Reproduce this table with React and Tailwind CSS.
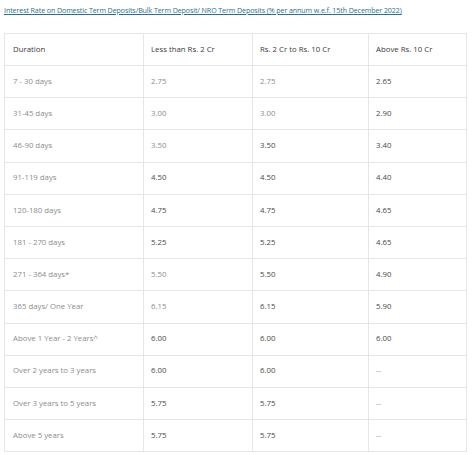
const rows = [
  ["7 - 30 days", ["2.75", 0], ["2.75", 0], ["2.65", 1]],
  ["31-45 days", ["3.00", 0], ["3.00", 0], ["2.90", 1]],
  ["46-90 days", ["3.50", 0], ["3.50", 1], ["3.40", 1]],
  ["91-119 days", ["4.50", 1], ["4.50", 1], ["4.40", 1]],
  ["120-180 days", ["4.75", 1], ["4.75", 1], ["4.65", 1]],
  ["181 - 270 days", ["5.25", 1], ["5.25", 1], ["4.65", 1]],
  ["271 - 364 days*", ["5.50", 0], ["5.50", 1], ["4.90", 1]],
  ["365 days/ One Year", ["6.15", 0], ["6.15", 1], ["5.90", 1]],
  ["Above 1 Year - 2 Years^", ["6.00", 1], ["6.00", 1], ["6.00", 1]],
  ["Over 2 years to 3 years", ["6.00", 1], ["6.00", 1], ["--", 0]],
  ["Over 3 years to 5 years", ["5.75", 1], ["5.75", 1], ["--", 0]],
  ["Above 5 years", ["5.75", 1], ["5.75", 1], ["--", 0]],
];

function Cell({ value, dark }) {
  return (
    <td
      className={
        "border border-[#e6e6e6] px-[7px] align-middle " +
        (dark ? "text-[#4a4a4a] font-medium" : "text-[#8c8c8c]")
      }
    >
      {value}
    </td>
  );
}

export default function App() {
  return (
    <div className="w-[474px] h-[455px] bg-white px-[4px] pt-[5px] font-['Open_Sans',sans-serif] overflow-hidden">
      <a
        href="#"
        className="block text-[7.1px] leading-[10px] text-[#2a6f92] underline tracking-[-0.1px]"
      >
        Interest Rate on Domestic Term Deposits/Bulk Term Deposit/ NRO Term Deposits (% per annum w.e.f. 15th December 2022)
      </a>

      <table className="mt-[18px] w-[462px] border-collapse table-fixed text-[7.8px]">
        <colgroup>
          <col className="w-[139px]" />
          <col className="w-[109px]" />
          <col className="w-[116px]" />
          <col className="w-[98px]" />
        </colgroup>
        <thead>
          <tr className="h-[32px]">
            <th className="border border-[#e6e6e6] px-[8px] text-left font-normal text-[#3a3a3a]">
              Duration
            </th>
            <th className="border border-[#e6e6e6] px-[7px] text-left font-normal text-[#3a3a3a]">
              Less than Rs. 2 Cr
            </th>
            <th className="border border-[#e6e6e6] px-[7px] text-left font-normal text-[#3a3a3a]">
              Rs. 2 Cr to Rs. 10 Cr
            </th>
            <th className="border border-[#e6e6e6] px-[7px] text-left font-normal text-[#3a3a3a]">
              Above Rs. 10 Cr
            </th>
          </tr>
        </thead>
        <tbody>
          {rows.map(([label, a, b, c]) => (
            <tr key={label} className="h-[32.2px]">
              <td className="border border-[#e6e6e6] px-[8px] text-[#8c8c8c]">{label}</td>
              <Cell value={a[0]} dark={a[1]} />
              <Cell value={b[0]} dark={b[1]} />
              <Cell value={c[0]} dark={c[1]} />
            </tr>
          ))}
        </tbody>
      </table>
    </div>
  );
}
